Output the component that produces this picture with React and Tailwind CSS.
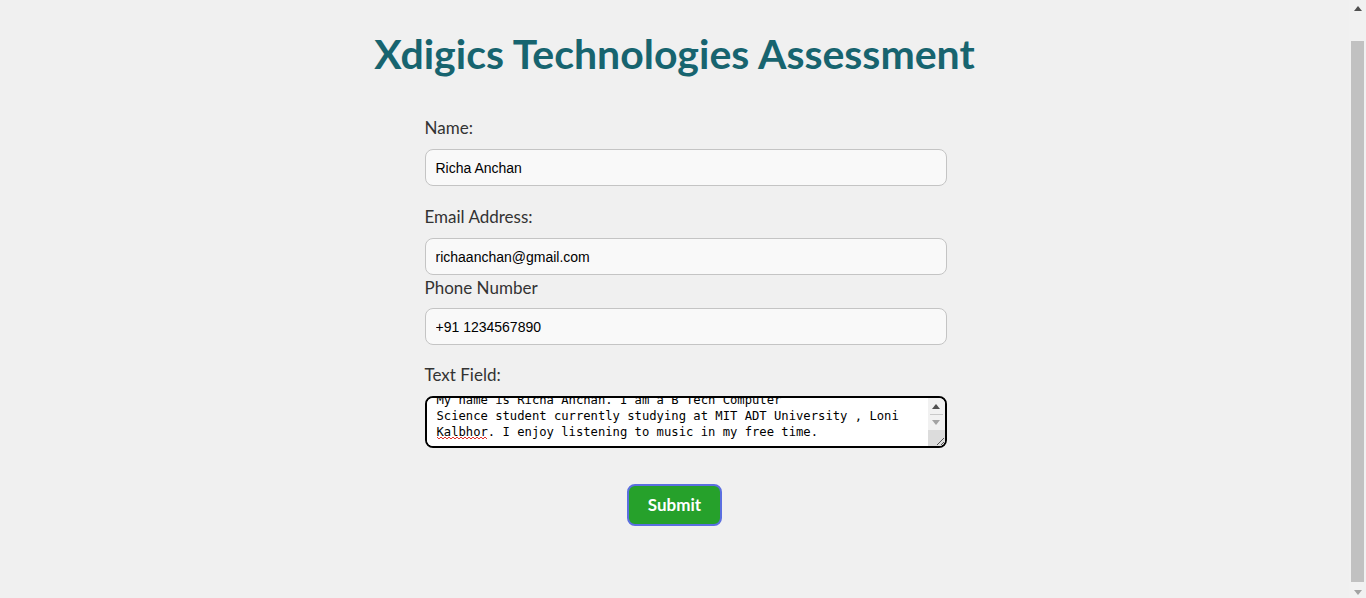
import { useEffect, useRef } from 'react';

const bio =
  'My name is Richa Anchan. I am a B Tech Computer\nScience student currently studying at MIT ADT University , Loni Kalbhor. I enjoy listening to music in my free time.';

const fieldFont = { fontFamily: '"Liberation Sans", Arial, sans-serif' };

function UpArrow({ color }) {
  return (
    <svg width="8" height="5" viewBox="0 0 8 5">
      <path d="M0 5 L4 0 L8 5 Z" fill={color} />
    </svg>
  );
}

function DownArrow({ color }) {
  return (
    <svg width="8" height="5" viewBox="0 0 8 5">
      <path d="M0 0 L8 0 L4 5 Z" fill={color} />
    </svg>
  );
}

export default function App() {
  const areaRef = useRef(null);

  useEffect(() => {
    // the reference shows the textarea scrolled down a little
    if (areaRef.current) areaRef.current.scrollTop = 8;
  }, []);

  return (
    <div className="flex h-[598px] overflow-hidden bg-[#f0f0f0]">
      <div
        className="flex-1 pt-[30px]"
        style={{ fontFamily: 'Lato, "Open Sans", sans-serif' }}
      >
        <h1 className="text-center text-[41px] font-bold leading-[48px] text-[#17646f]">
          Xdigics Technologies Assessment
        </h1>

        <form className="mx-auto mt-[40px] w-[544px]" onSubmit={(e) => e.preventDefault()}>
          <div className="pl-[22px]">
            {/* Name */}
            <label className="block text-[17px] leading-[20px] text-[#333]">Name:</label>
            <input
              type="text"
              defaultValue="Richa Anchan"
              className="mt-[11px] block h-[37px] w-full rounded-[8px] border border-[#c4c4c4] bg-[#f9f9f9] px-[10px] text-[14px] text-black outline-none"
              style={fieldFont}
            />

            {/* Email */}
            <label className="mt-[21px] block text-[17px] leading-[20px] text-[#333]">Email Address:</label>
            <input
              type="email"
              defaultValue="richaanchan@gmail.com"
              className="mt-[11px] block h-[37px] w-full rounded-[8px] border border-[#c4c4c4] bg-[#f9f9f9] px-[10px] text-[14px] text-black outline-none"
              style={fieldFont}
            />

            {/* Phone */}
            <label className="mt-[3px] block text-[17px] leading-[20px] text-[#333]">Phone Number</label>
            <input
              type="tel"
              defaultValue="+91 1234567890"
              className="mt-[10px] block h-[37px] w-full rounded-[8px] border border-[#c4c4c4] bg-[#f9f9f9] px-[10px] text-[14px] text-black outline-none"
              style={fieldFont}
            />

            {/* Text field */}
            <label className="mt-[20px] block text-[17px] leading-[20px] text-[#333]">Text Field:</label>
            <div className="relative mt-[11px] flex h-[52px] overflow-hidden rounded-[8px] border-2 border-black bg-white">
              <textarea
                ref={areaRef}
                defaultValue={bio}
                spellCheck={false}
                className="h-full flex-1 resize-none overflow-hidden bg-white pb-[20px] pl-[10px] pr-0 pt-[2px] text-[12.2px] leading-[16px] text-black outline-none"
                style={{ fontFamily: '"DejaVu Sans Mono", "Liberation Mono", monospace' }}
              />
              {/* textarea scrollbar */}
              <div className="flex w-[17px] flex-col bg-[#f1f1f1]">
                <div className="flex h-[16px] items-center justify-center">
                  <UpArrow color="#505050" />
                </div>
                <div className="mx-[2px] h-px bg-[#c9c9c9]" />
                <div className="flex h-[15px] items-center justify-center">
                  <DownArrow color="#a3a3a3" />
                </div>
                <div className="relative flex-1 bg-[#dcdcdc]">
                  <svg className="absolute bottom-0 right-0" width="9" height="9" viewBox="0 0 9 9">
                    <path d="M1 8 L8 1 M5 8 L8 5" stroke="#555" strokeWidth="1" />
                  </svg>
                </div>
              </div>
              {/* spellcheck squiggle under "Kalbhor" */}
              <svg className="absolute left-[10px] top-[38px]" width="51" height="4" viewBox="0 0 51 4">
                <path
                  d="M0 1 L2 3 L4 1 L6 3 L8 1 L10 3 L12 1 L14 3 L16 1 L18 3 L20 1 L22 3 L24 1 L26 3 L28 1 L30 3 L32 1 L34 3 L36 1 L38 3 L40 1 L42 3 L44 1 L46 3 L48 1 L50 3"
                  stroke="#e0312b"
                  strokeWidth="1"
                  fill="none"
                />
              </svg>
            </div>
          </div>

          <div className="mt-[36px] flex justify-center">
            <button
              type="submit"
              className="h-[42px] w-[95px] rounded-[8px] border-2 border-[#5b6fe0] bg-[#26a12b] text-[17px] font-bold text-white"
            >
              Submit
            </button>
          </div>
        </form>
      </div>

      {/* page scrollbar */}
      <div className="flex w-[17px] flex-col items-center bg-[#f1f1f1]">
        <div className="flex h-[17px] items-center justify-center">
          <UpArrow color="#505050" />
        </div>
        <div className="mt-[24px] w-[13px] flex-1 bg-[#c1c1c1]" />
        <div className="mt-[4px] flex h-[12px] items-center justify-center">
          <DownArrow color="#a3a3a3" />
        </div>
      </div>
    </div>
  );
}
